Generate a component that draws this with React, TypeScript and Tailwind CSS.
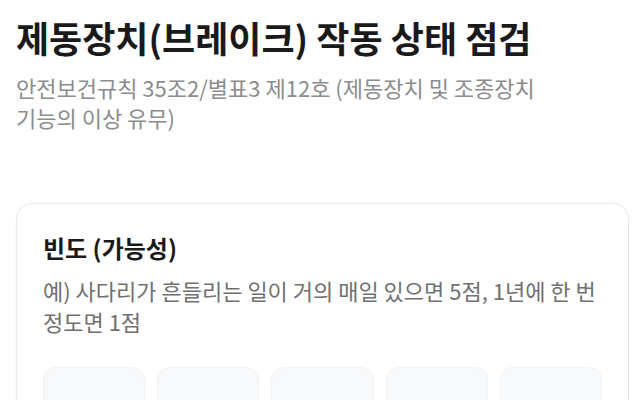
const scores = [1, 2, 3, 4, 5];

function ScoreTile({ value }: { value: number }) {
  return (
    <button
      type="button"
      aria-label={`${value}점`}
      className="h-[96px] rounded-xl border border-[#f2f3f5] bg-[#f8f9fa]"
    />
  );
}

export default function App() {
  return (
    <div className="min-h-screen bg-white pl-4 pr-[11px] pt-[15px] font-['Noto_Sans_CJK_KR','Noto_Sans',sans-serif]">
      <h1 className="text-[36px] font-bold leading-[44px] text-[#1a1a1a]">
        제동장치(브레이크) 작동 상태 점검
      </h1>
      <p className="mt-[13px] max-w-[560px] break-keep text-[22px] leading-[30px] text-[#8c8c8c]">
        안전보건규칙 35조2/별표3 제12호 (제동장치 및 조종장치 기능의 이상 유무)
      </p>

      <section className="mt-[71px] rounded-2xl border border-[#e8e8e8] bg-white px-[26px] pt-7 pb-6 shadow-[0_1px_3px_rgba(0,0,0,0.04)]">
        <h2 className="text-[24px] font-bold leading-8 text-[#1a1a1a]">
          빈도 (가능성)
        </h2>
        <p className="mt-[11px] break-keep text-[22px] leading-[31px] text-[#707070]">
          예) 사다리가 흔들리는 일이 거의 매일 있으면 5점, 1년에 한 번 정도면 1점
        </p>
        <div className="mt-[30px] grid grid-cols-5 gap-3">
          {scores.map((s) => (
            <ScoreTile key={s} value={s} />
          ))}
        </div>
      </section>
    </div>
  );
}
